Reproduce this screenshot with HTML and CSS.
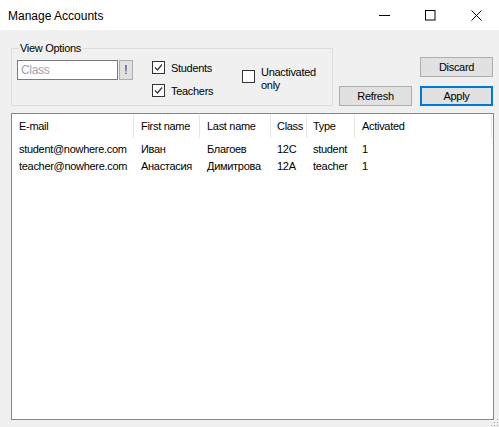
FILE: index.html
```html
<!DOCTYPE html>
<html>
<head>
<meta charset="utf-8">
<title>Manage Accounts</title>
<link rel="stylesheet" href="styles.css">
</head>
<body>
<div class="window">
  <div class="titlebar">
    <span class="title">Manage Accounts</span>
    <div class="controls">
      <span class="ctl"><svg width="11" height="11" viewBox="0 0 11 11"><path d="M0 5.5H11" stroke="#000" stroke-width="1"/></svg></span>
      <span class="ctl"><svg width="11" height="11" viewBox="0 0 11 11"><rect x="0.5" y="0.5" width="9.5" height="9.5" fill="none" stroke="#000" stroke-width="1"/></svg></span>
      <span class="ctl"><svg width="11" height="11" viewBox="0 0 11 11"><path d="M0.5 0.5L10.5 10.5M10.5 0.5L0.5 10.5" stroke="#000" stroke-width="1"/></svg></span>
    </div>
  </div>
  <div class="client">
    <div class="toprow">
      <fieldset class="group">
        <legend class="legend">View Options</legend>
        <div class="group-body">
          <div class="class-field">
            <span class="textbox">Class</span>
            <span class="bang">!</span>
          </div>
          <div class="checks">
            <div class="check"><span class="box"><svg width="11" height="11" viewBox="0 0 11 11"><path d="M2 5.5L4.5 8L9 2.5" fill="none" stroke="#333" stroke-width="1.2"/></svg></span><span>Students</span></div>
            <div class="check"><span class="box"><svg width="11" height="11" viewBox="0 0 11 11"><path d="M2 5.5L4.5 8L9 2.5" fill="none" stroke="#333" stroke-width="1.2"/></svg></span><span>Teachers</span></div>
          </div>
          <div class="check unact"><span class="box"></span><span class="unact-text">Unactivated<br>only</span></div>
        </div>
      </fieldset>
      <div class="buttons">
        <div class="btnrow"><span class="btn">Discard</span></div>
        <div class="btnrow"><span class="btn">Refresh</span><span class="btn default">Apply</span></div>
      </div>
    </div>
    <div class="listview">
      <div class="lv-row lv-header">
        <span class="c1">E-mail</span><span class="c2">First name</span><span class="c3">Last name</span><span class="c4">Class</span><span class="c5">Type</span><span class="c6">Activated</span>
      </div>
      <div class="lv-row">
        <span class="c1">student@nowhere.com</span><span class="c2">Иван</span><span class="c3">Благоев</span><span class="c4">12C</span><span class="c5">student</span><span class="c6">1</span>
      </div>
      <div class="lv-row">
        <span class="c1">teacher@nowhere.com</span><span class="c2">Анастасия</span><span class="c3">Димитрова</span><span class="c4">12A</span><span class="c5">teacher</span><span class="c6">1</span>
      </div>
    </div>
    <div class="grip"></div>
  </div>
</div>
</body>
</html>
```
FILE: styles.css
```css
* { box-sizing: border-box; }
html, body { margin: 0; padding: 0; }
body {
  width: 499px;
  height: 427px;
  overflow: hidden;
  font-family: "Liberation Sans", Arial, sans-serif;
  font-size: 11px;
  letter-spacing: -0.3px;
  color: #000;
}
.window {
  width: 499px;
  height: 427px;
  display: flex;
  flex-direction: column;
  background: #f0f0f0;
}
.titlebar {
  height: 30px;
  background: #fff;
  display: flex;
  align-items: center;
  justify-content: space-between;
  flex: none;
}
.title {
  font-size: 12px;
  letter-spacing: 0;
  padding-left: 8px;
  padding-top: 1px;
}
.controls {
  display: flex;
  height: 30px;
}
.ctl {
  width: 46px;
  height: 30px;
  display: flex;
  align-items: center;
  justify-content: center;
}
.ctl svg { display: block; }
.ctl:nth-child(1) { width: 45px; }

.client {
  flex: 1;
  padding: 12px 5px 7px 11px;
  display: flex;
  flex-direction: column;
  position: relative;
}
.toprow {
  display: flex;
  justify-content: space-between;
  align-items: flex-end;
  height: 64px;
  flex: none;
}
.group {
  margin: 0;
  width: 322px;
  height: 64px;
  border: 1px solid #dcdcdc;
  padding: 0 0 0 5px;
  min-width: 0;
}
.legend {
  padding: 0 2px 0 1px;
  margin-left: 2px;
  line-height: 12px;
  height: 12px;
}
.group-body {
  display: flex;
  padding-top: 6px;
}
.class-field {
  display: flex;
  gap: 1px;
  height: 20px;
  flex: none;
}
.textbox {
  width: 101px;
  height: 20px;
  border: 1px solid #7a7a7a;
  background: #fff;
  color: #9ea3b0;
  font-size: 12px;
  line-height: 18px;
  padding-left: 3px;
}
.bang {
  width: 14px;
  height: 20px;
  background: #e1e1e1;
  border: 1px solid #adadad;
  color: #7a0080;
  font-size: 12px;
  line-height: 18px;
  text-align: center;
  letter-spacing: 0;
}
.checks {
  display: flex;
  flex-direction: column;
  gap: 10px;
  margin-left: 19px;
  width: 90px;
  padding-top: 1px;
  flex: none;
}
.check {
  display: flex;
  align-items: center;
  gap: 6px;
  height: 13px;
}
.box {
  width: 13px;
  height: 13px;
  border: 1px solid #333;
  background: #fff;
  display: flex;
  align-items: center;
  justify-content: center;
  flex: none;
}
.box svg { display: block; }
.unact {
  margin-top: 10px;
}
.unact-text {
  line-height: 13px;
  margin-top: 5px;
}
.buttons {
  display: flex;
  flex-direction: column;
  align-items: flex-end;
  gap: 9px;
  margin-right: 1px;
}
.btnrow {
  display: flex;
  gap: 8px;
}
.btn {
  width: 73px;
  height: 20px;
  background: #e1e1e1;
  border: 1px solid #adadad;
  line-height: 18px;
  text-align: center;
}
.btn.default {
  border: 2px solid #0078d7;
  line-height: 16px;
}
.listview {
  margin-top: 7px;
  flex: 1;
  background: #fff;
  border: 1px solid #828790;
}
.lv-row {
  display: flex;
  height: 17px;
  line-height: 17px;
  white-space: nowrap;
}
.lv-header {
  height: 25px;
  margin-bottom: 2px;
}
.lv-row span {
  padding-left: 7px;
  overflow: hidden;
  flex: none;
}
.lv-header span {
  border-right: 1px solid #e5e5e5;
  margin: 1px 0;
  line-height: 23px;
}
.c1 { width: 122px; }
.c2 { width: 66px; }
.c3 { width: 71px; }
.lv-row .c4 { width: 36px; padding-left: 6px; }
.lv-row .c5 { width: 48px; padding-left: 6px; }
.c6 { width: 137px; }
.grip {
  position: absolute;
  right: 1px;
  bottom: 1px;
  width: 8px;
  height: 8px;
  background:
    radial-gradient(circle, #a0a0a0 0 1px, transparent 1px) 0 0 / 3px 3px;
  clip-path: polygon(100% 0, 100% 100%, 0 100%);
}
```
